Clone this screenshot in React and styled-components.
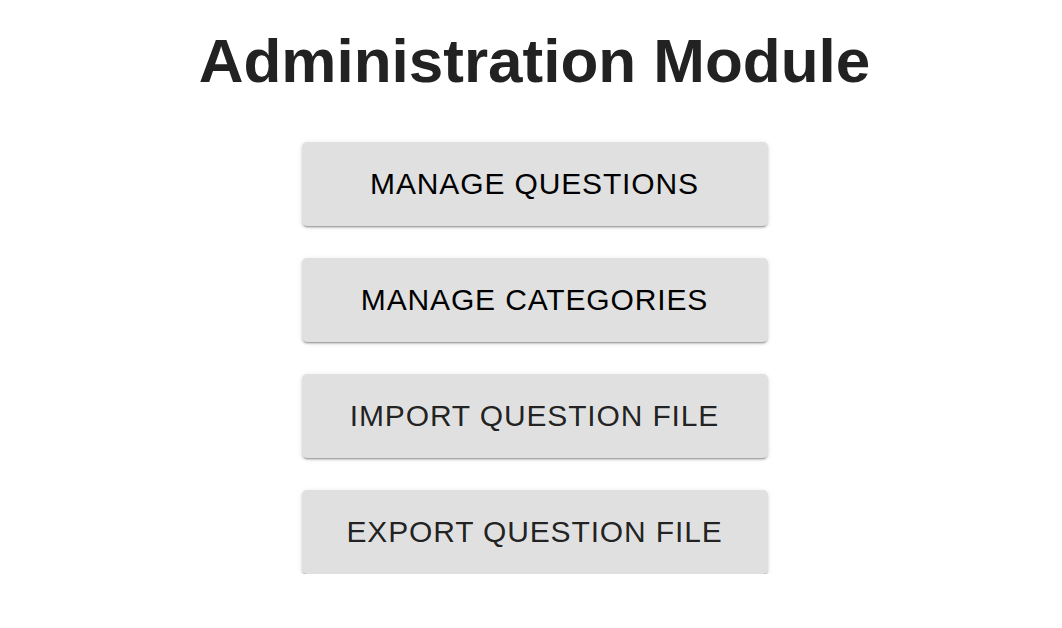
import React from "react";
import styled, { createGlobalStyle } from "styled-components";

const GlobalStyle = createGlobalStyle`
  html, body { margin: 0; padding: 0; background: #ffffff; }
  body { font-family: "Liberation Sans", Arial, sans-serif; }
`;

const Page = styled.main`
  display: flex;
  flex-direction: column;
  align-items: center;
  padding-left: 7px;
`;

const Title = styled.h1`
  margin: 24px 0 0;
  font-family: "Liberation Sans", Arial, sans-serif;
  font-weight: 700;
  font-size: 62px;
  line-height: 1.2;
  color: #222222;
  letter-spacing: 0;
`;

const ButtonList = styled.div`
  display: flex;
  flex-direction: column;
  gap: 32px;
  margin-top: 44px;
`;

const ActionButton = styled.button`
  width: 466px;
  height: 84px;
  display: flex;
  align-items: center;
  justify-content: center;
  border: none;
  border-radius: 5px;
  background: #e0e0e0;
  color: ${(p) => (p.$dark ? "#000000" : "rgba(0,0,0,0.87)")};
  font-family: "Liberation Sans", Arial, sans-serif;
  font-size: 30px;
  font-weight: 400;
  letter-spacing: 0.02857em;
  text-transform: uppercase;
  box-shadow: 0px 3px 1px -2px rgba(0,0,0,0.2), 0px 2px 2px 0px rgba(0,0,0,0.14), 0px 1px 5px 0px rgba(0,0,0,0.12);
  cursor: pointer;
  padding: 0;
`;

const actions = [
  { label: "Manage Questions", dark: true },
  { label: "Manage Categories", dark: true },
  { label: "Import Question File", dark: false },
  { label: "Export Question File", dark: false },
];

export default function App() {
  return (
    <>
      <GlobalStyle />
      <Page>
        <Title>Administration Module</Title>
        <ButtonList>
          {actions.map((a) => (
            <ActionButton key={a.label} $dark={a.dark}>
              {a.label}
            </ActionButton>
          ))}
        </ButtonList>
      </Page>
    </>
  );
}
